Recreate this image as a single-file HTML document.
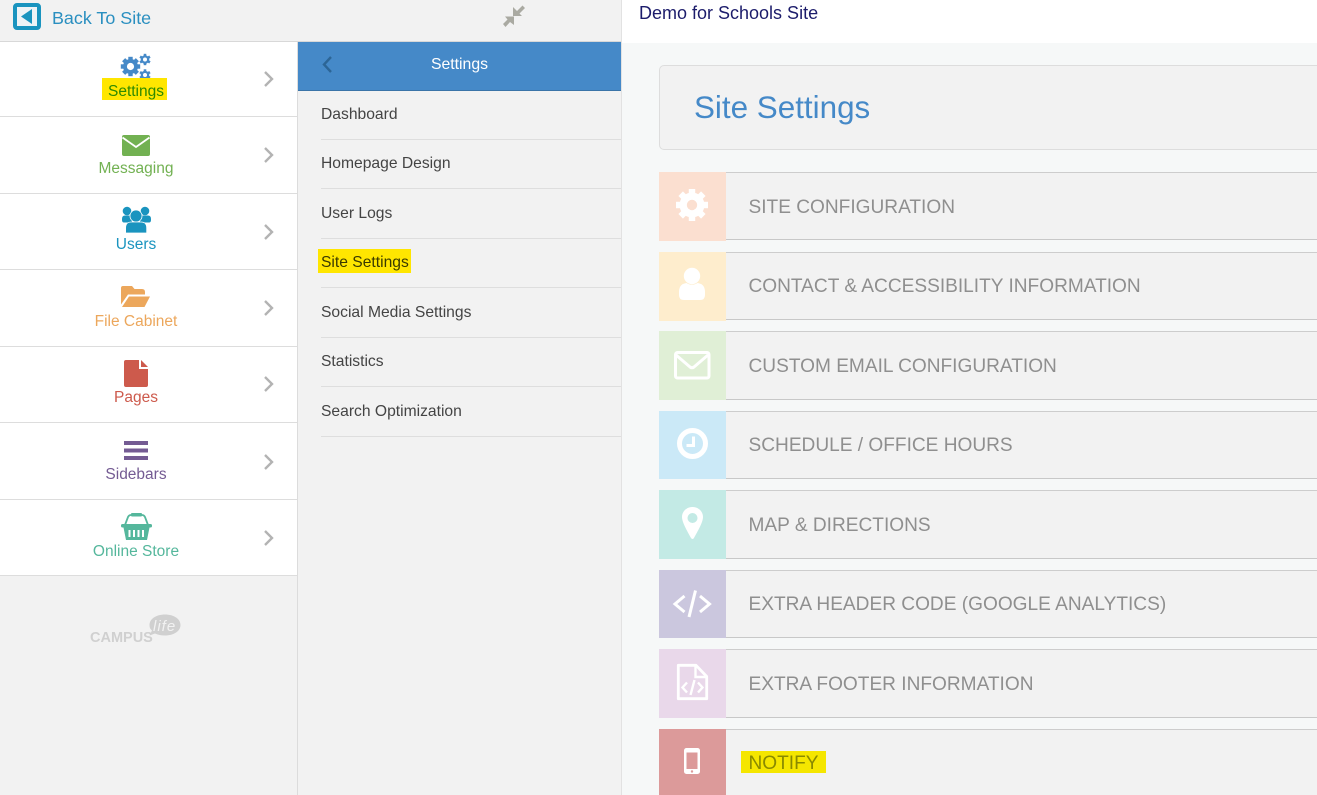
<!DOCTYPE html>
<html><head><meta charset="utf-8">
<style>
html,body{margin:0;padding:0;background:#f6f8f8;}
#p{position:relative;width:1317px;height:795px;overflow:hidden;background:#f6f8f8;font-family:"Liberation Sans",sans-serif;font-size:16px;}
.a{position:absolute;}
.t{position:absolute;white-space:nowrap;}
.c{position:absolute;left:0;width:272px;text-align:center;height:22px;line-height:22px;font-size:15.5px;z-index:2;}
.l{position:absolute;left:321px;height:22px;line-height:22px;color:#444;white-space:nowrap;font-size:15.65px;}
.d{position:absolute;left:321px;width:300px;height:1px;background:#dedede;}
.s{position:absolute;left:0;width:297px;height:1px;background:#dddddd;}
.ib{position:absolute;left:659px;width:67px;}
.pn{position:absolute;left:726px;width:591px;background:#f2f2f2;border-top:1px solid #cdcdcd;border-bottom:1px solid #c8c8c8;box-sizing:border-box;}
.r{position:absolute;left:748.500px;height:24px;line-height:24px;font-size:19.1px;color:#8f8f8f;white-space:nowrap;}
svg{position:absolute;left:0;top:0;}
</style></head><body><div id="p">
<div class="a" style="left:0;top:0;width:297px;height:795px;background:#f2f2f2"></div>
<div class="a" style="left:0;top:42px;width:297px;height:534px;background:#fff"></div>
<div class="a" style="left:297px;top:0;width:325px;height:795px;background:#f2f2f2"></div>
<div class="a" style="left:0;top:41px;width:621px;height:1px;background:#d8d8d8"></div>
<div class="a" style="left:297px;top:42px;width:1px;height:753px;background:#dcdcdc"></div>
<div class="a" style="left:621px;top:0;width:1px;height:795px;background:#e2e2e2"></div>
<div class="a" style="left:622px;top:0;width:695px;height:43px;background:#fff"></div>
<div class="a" style="left:298px;top:42px;width:323px;height:48px;background:#4589c8;border-bottom:1px solid #3a74a8"></div>
<div class="s" style="top:116px"></div><div class="s" style="top:193px"></div><div class="s" style="top:269px"></div><div class="s" style="top:346px"></div><div class="s" style="top:422px"></div><div class="s" style="top:499px"></div><div class="s" style="top:575px"></div>
<div class="a" style="left:318px;top:249px;width:93px;height:24px;background:#ffe600"></div>
<div class="a" style="left:659px;top:65px;width:700px;height:85px;box-sizing:border-box;background:#f2f2f2;border:1px solid #ddd;border-radius:5px"></div>
<div class="pn" style="top:172px;height:68px"></div>
<div class="pn" style="top:252px;height:68px"></div>
<div class="pn" style="top:331px;height:69px"></div>
<div class="pn" style="top:411px;height:68px"></div>
<div class="pn" style="top:490px;height:69px"></div>
<div class="pn" style="top:570px;height:68px"></div>
<div class="pn" style="top:649px;height:69px"></div>
<div class="pn" style="top:729px;height:70px"></div>
<div class="ib" style="top:172px;height:69px;background:#fbdfd0"></div>
<div class="ib" style="top:252px;height:69px;background:#feedcd"></div>
<div class="ib" style="top:331px;height:69px;background:#e0efd6"></div>
<div class="ib" style="top:411px;height:68px;background:#cbe9f7"></div>
<div class="ib" style="top:490px;height:69px;background:#c3eae5"></div>
<div class="ib" style="top:570px;height:68px;background:#cbc7de"></div>
<div class="ib" style="top:649px;height:69px;background:#e9d8ea"></div>
<div class="ib" style="top:729px;height:66px;background:#dc9a9a"></div>
<div class="a" style="left:741px;top:751px;width:85px;height:22px;background:#f5e600"></div>

<div class="t" style="left:52px;top:7px;line-height:22px;font-size:17.9px;color:#2a8fc0">Back To Site</div>
<div class="t" style="left:639px;top:2px;line-height:22px;font-size:18px;color:#1c1c6b">Demo for Schools Site</div>
<div class="t" style="left:694px;top:89px;line-height:38px;font-size:31.4px;color:#4589c8">Site Settings</div>

<div class="c" style="color:#2f8a00;top:81px">Settings</div>
<div class="c" style="top:158px;color:#72b152">Messaging</div>
<div class="c" style="top:234px;color:#1a94bf">Users</div>
<div class="c" style="top:311px;color:#eca75c">File Cabinet</div>
<div class="c" style="top:387px;color:#cd5a4c">Pages</div>
<div class="c" style="top:464px;color:#745b93">Sidebars</div>
<div class="c" style="top:541px;color:#55b79c">Online Store</div>

<div class="t" style="left:298px;top:54px;width:323px;text-align:center;line-height:22px;font-size:15.8px;color:#fff">Settings</div>
<div class="l" style="top:104px">Dashboard</div><div class="d" style="top:139px"></div>
<div class="l" style="top:153px">Homepage Design</div><div class="d" style="top:188px"></div>
<div class="l" style="top:203px">User Logs</div><div class="d" style="top:238px"></div>
<div class="l" style="top:252px;color:#3a3a00">Site Settings</div><div class="d" style="top:287px"></div>
<div class="l" style="top:302px">Social Media Settings</div><div class="d" style="top:337px"></div>
<div class="l" style="top:351px">Statistics</div><div class="d" style="top:386px"></div>
<div class="l" style="top:401px">Search Optimization</div><div class="d" style="top:436px"></div>

<div class="r" style="top:196px">SITE CONFIGURATION</div>
<div class="r" style="top:275px">CONTACT &amp; ACCESSIBILITY INFORMATION</div>
<div class="r" style="top:355px">CUSTOM EMAIL CONFIGURATION</div>
<div class="r" style="top:434px">SCHEDULE / OFFICE HOURS</div>
<div class="r" style="top:514px">MAP &amp; DIRECTIONS</div>
<div class="r" style="top:593px">EXTRA HEADER CODE (GOOGLE ANALYTICS)</div>
<div class="r" style="top:673px">EXTRA FOOTER INFORMATION</div>
<div class="r" style="top:752px;color:#8a8a00">NOTIFY</div>

<svg width="1317" height="795" viewBox="0 0 1317 795">
<!-- back icon -->
<rect x="15" y="5" width="24" height="23" rx="2" fill="#eef3f6" stroke="#1a94bf" stroke-width="4"/>
<path d="M32 9V24L21 16.500Z" fill="#1a94bf"/>
<!-- compress -->
<g fill="#aaaaa2">
<path d="M513 7V16H522L519.500 13.500L525 8L522.500 5.500L517 11Z"/>
<path d="M514 25V16.500H505L507.500 19.500L503 24L505.500 27L510 22Z"/>
</g>
<!-- chevrons -->
<g fill="none" stroke="#b3b3b3" stroke-width="2.400">
<path d="M265 72L272 79L265 86"/><path d="M265 148L272 155L265 162"/><path d="M265 225L272 232L265 239"/><path d="M265 301L272 308L265 315"/><path d="M265 377L272 384L265 391"/><path d="M265 455L272 462L265 469"/><path d="M265 531L272 538L265 545"/>
</g>
<path d="M331 57L324 64.500L331 72" fill="none" stroke="#2c6596" stroke-width="2.400"/>
<!-- settings gears -->
<g fill="#4589c8">
<g transform="translate(130.500 66.500)">
<rect x="-2.200" y="-9.700" width="4.400" height="19.400"/><rect x="-2.200" y="-9.700" width="4.400" height="19.400" transform="rotate(45)"/><rect x="-2.200" y="-9.700" width="4.400" height="19.400" transform="rotate(90)"/><rect x="-2.200" y="-9.700" width="4.400" height="19.400" transform="rotate(135)"/>
<circle r="7.500"/><circle r="3.600" fill="#fff"/>
</g>
<g transform="translate(145 59.500)">
<rect x="-1.300" y="-5.700" width="2.600" height="11.400"/><rect x="-1.300" y="-5.700" width="2.600" height="11.400" transform="rotate(60)"/><rect x="-1.300" y="-5.700" width="2.600" height="11.400" transform="rotate(120)"/>
<circle r="4.300"/><circle r="2" fill="#fff"/>
</g>
<g transform="translate(145 75)">
<rect x="-1.300" y="-5.700" width="2.600" height="11.400"/><rect x="-1.300" y="-5.700" width="2.600" height="11.400" transform="rotate(60)"/><rect x="-1.300" y="-5.700" width="2.600" height="11.400" transform="rotate(120)"/>
<circle r="4.300"/><circle r="2" fill="#fff"/>
</g>
</g>
<rect x="102" y="78" width="65" height="22" fill="#ffe600"/>
<!-- envelope -->
<rect x="122" y="135" width="28" height="21" rx="2" fill="#72b152"/>
<path d="M122.500 137.500L136 147L149.500 137.500" fill="none" stroke="#fff" stroke-width="1.800"/>
<!-- users -->
<g fill="#1a94bf">
<circle cx="127" cy="211" r="4.300"/><circle cx="145" cy="211" r="4.300"/>
<path d="M122 219Q122 215.500 125 215.500H132V222.500H124Q122 222.500 122 220Z"/><path d="M151 219Q151 215.500 148 215.500H140V222.500H149Q151 222.500 151 220Z"/>
</g>
<circle cx="136" cy="216" r="6" fill="#1a94bf" stroke="#fff" stroke-width="0.800"/>
<path d="M125.600 233V228Q125.600 222 131 222H141Q146.700 222 146.700 228V233Z" fill="#1a94bf" stroke="#fff" stroke-width="0.800"/>
<!-- folder -->
<path d="M121 288Q121 286 123 286H132L134.500 289H142Q145 289 145 292V294.500H128L121 304.500Z" fill="#eca75c"/>
<path d="M129 296.500H150L144.500 307H122Z" fill="#eca75c"/>
<!-- page -->
<path d="M124 362Q124 360 126 360H139V369H148V385Q148 387 146 387H126Q124 387 124 385Z" fill="#cd5a4c"/>
<path d="M141 360L148 367H141Z" fill="#cd5a4c"/>
<!-- sidebars -->
<g fill="#745b93"><rect x="124" y="441" width="24" height="4"/><rect x="124" y="448.500" width="24" height="4"/><rect x="124" y="456" width="24" height="4"/></g>
<!-- basket -->
<path d="M125 525L128 517Q129 515 131 515H142Q144 515 145 517L148 525" fill="none" stroke="#55b79c" stroke-width="1.800"/>
<rect x="131" y="513" width="11" height="3.500" rx="1" fill="#55b79c"/>
<rect x="121" y="524" width="31" height="3.500" rx="1.500" fill="#55b79c"/>
<path d="M123.500 527.500H149.500L147 540H126Z" fill="#55b79c"/>
<g fill="#fff"><rect x="128.500" y="530" width="2" height="7"/><rect x="133" y="530" width="2" height="7"/><rect x="137.500" y="530" width="2" height="7"/><rect x="142" y="530" width="2" height="7"/></g>
<!-- campus logo -->
<text x="90" y="642" font-family="Liberation Sans" font-weight="700" font-size="14.500" fill="#d0d0d0">CAMPUS</text>
<path d="M165 614.500C174 614.500 180.500 619 180.500 625C180.500 631 174 635.500 165 635.500C161 635.500 158 634.800 155 633.500L149.500 635.500L152 630.500C150 629 149.500 627 149.500 625C149.500 619 156 614.500 165 614.500Z" fill="#d0d0d0"/>
<text x="153" y="631" font-family="Liberation Sans" font-style="italic" font-size="15" letter-spacing="1" fill="#f2f2f2">life</text>
<!-- site config gear -->
<g transform="translate(692 205)" fill="#fff">
<rect x="-3.200" y="-16" width="6.400" height="32"/><rect x="-3.200" y="-16" width="6.400" height="32" transform="rotate(45)"/><rect x="-3.200" y="-16" width="6.400" height="32" transform="rotate(90)"/><rect x="-3.200" y="-16" width="6.400" height="32" transform="rotate(135)"/>
<circle r="12.500"/><circle r="5.200" fill="#fbdfd0"/>
</g>
<!-- person -->
<path d="M679 295V292Q679 283 688 283H696Q705 283 705 292V295Q705 300 700 300H684Q679 300 679 295Z" fill="#fff"/>
<circle cx="692" cy="276" r="8.500" fill="#fff" stroke="#feedcd" stroke-width="0.600"/>
<!-- mail -->
<rect x="675.500" y="352.500" width="33.500" height="25.500" rx="2" fill="none" stroke="#fff" stroke-width="3"/>
<path d="M676 355L690 367Q692 368.500 694 367L708 355" fill="none" stroke="#fff" stroke-width="3"/>
<!-- clock -->
<circle cx="692.500" cy="443.500" r="13" fill="none" stroke="#fff" stroke-width="5"/>
<path d="M693.500 436.500V445.500H686.500" fill="none" stroke="#fff" stroke-width="3"/>
<!-- pin -->
<path fill-rule="evenodd" d="M692.500 507C698.500 507 703 511.500 703 517C703 523 696 534 694 538Q692.500 540 691 538C689 534 682 523 682 517C682 511.500 686.500 507 692.500 507ZM692.500 513A5 5 0 1 0 692.500 523A5 5 0 1 0 692.500 513Z" fill="#fff"/>
<!-- code -->
<g fill="none" stroke="#fff" stroke-width="3">
<path d="M684.500 596L675 604L684.500 612"/><path d="M700 596L709.500 604L700 612"/><path d="M695.500 590.500L689 617"/>
</g>
<!-- file code -->
<path d="M678.300 665.300H696L706.700 676.500V698.700H678.300Z" fill="none" stroke="#fff" stroke-width="2.800" stroke-linejoin="round"/>
<path d="M695.500 665.500V677H707" fill="none" stroke="#fff" stroke-width="2.400"/>
<g fill="none" stroke="#fff" stroke-width="2.400">
<path d="M687 682.500L682.500 687.500L687 692.500"/><path d="M698 682.500L702.500 687.500L698 692.500"/><path d="M694.500 680L690.500 695"/>
</g>
<!-- phone -->
<rect x="684" y="748" width="16" height="26" rx="2.500" fill="#fff"/>
<rect x="686.500" y="752.500" width="11" height="16.500" fill="#dc9a9a"/>
<circle cx="692" cy="771.500" r="1.200" fill="#dc9a9a"/>
</svg>
</div></body></html>
